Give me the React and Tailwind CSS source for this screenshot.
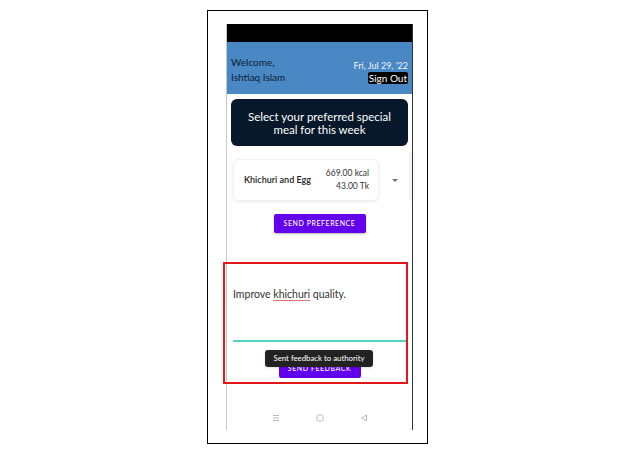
export default function App() {
  return (
    <div className="w-[644px] h-[453px] bg-white pl-[207px] pt-[10px] font-['Lato','Noto_Sans',sans-serif]">
      <div className="w-[221px] h-[434px] border border-black pl-[18px] pt-[13px] relative">
        {/* phone screen */}
        <div className="w-[187px] h-[406px] border-l border-l-[#c8c8c8] border-r border-r-[#333] flex flex-col bg-white">
          <div className="h-[18px] bg-black" />
          <div className="h-[52px] bg-[#4a87c5] flex items-center justify-between pl-[4px] pr-[4px] pt-[4px]">
            <div className="text-[10px] leading-[15px] text-[#0e1d33]">
              <div>Welcome,</div>
              <div>Ishtiaq Islam</div>
            </div>
            <div className="flex flex-col items-end pt-[3px]">
              <div className="text-[9px] leading-[12px] text-[#eef4fb]">Fri, Jul 29, '22</div>
              <div className="text-[10px] leading-[12px] text-white bg-black px-[1px] rounded-[2px]">Sign Out</div>
            </div>
          </div>

          <div className="mx-[4px] mt-[5px] h-[47px] rounded-[6px] bg-[#061829] flex flex-col items-center justify-center text-white text-[11.5px] leading-[13px]">
            <div>Select your preferred special</div>
            <div>meal for this week</div>
          </div>

          <div className="flex items-center mt-[13px] pl-[6px]">
            <div className="w-[146px] h-[42px] rounded-[6px] border border-[#f0f0f0] shadow-[0_1px_3px_rgba(0,0,0,0.08)] flex items-center justify-between pl-[10px] pr-[9px]">
              <div className="text-[9px] font-semibold text-[#222]">Khichuri and Egg</div>
              <div className="text-[8.5px] leading-[13px] text-[#333] text-right">
                <div>669.00 kcal</div>
                <div>43.00 Tk</div>
              </div>
            </div>
            <div className="ml-[13px] w-0 h-0 border-l-[3px] border-r-[3px] border-t-[3px] border-l-transparent border-r-transparent border-t-[#777]" />
            <div className="ml-auto w-[3px] h-[50px] -mt-[8px] bg-[#f2f2f2] rounded-l-[3px]" />
          </div>

          <div className="flex justify-center mt-[13px]">
            <button className="w-[92px] h-[19px] rounded-[2px] bg-[#6200ee] text-white text-[7px] tracking-[0.08em] font-medium shadow-[0_1px_2px_rgba(0,0,0,0.3)]">
              SEND PREFERENCE
            </button>
          </div>

          <div className="mt-[55px] pl-[6px] text-[10.5px] text-[#333] leading-[12px]">
            Improve <span className="underline decoration-[#e07070] underline-offset-[2px]">khichuri</span> quality.
          </div>
          <div className="ml-[6px] mr-[6px] mt-[40px] h-[2px] bg-[#4fd3c0]" />
          <div className="flex justify-center mt-[17px]">
            <button className="w-[82px] h-[19px] rounded-[2px] bg-[#6200ee] text-white text-[7px] tracking-[0.08em] font-medium">
              SEND FEEDBACK
            </button>
          </div>

          <div className="mt-auto mb-[7px] flex justify-center gap-[36px] text-[#aaa] items-center h-[10px]">
            <svg width="8" height="8" viewBox="0 0 8 8" stroke="#aaa" strokeWidth="0.8" fill="none">
              <path d="M1 1.5h6M1 4h6M1 6.5h6" />
            </svg>
            <svg width="8" height="8" viewBox="0 0 8 8" stroke="#aaa" strokeWidth="0.8" fill="none">
              <rect x="1" y="1" width="6" height="6" rx="1.5" />
            </svg>
            <svg width="8" height="8" viewBox="0 0 8 8" stroke="#aaa" strokeWidth="0.8" fill="none">
              <path d="M6.5 1L1.5 4l5 3z" />
            </svg>
          </div>
        </div>

        {/* annotation box */}
        <div className="absolute left-[15px] top-[251px] w-[185px] h-[122px] border-2 border-[#e3161c]" />
        {/* snackbar */}
        <div className="absolute left-[57px] top-[339px] w-[108px] h-[17px] rounded-[3px] bg-[#222] text-white text-[7.8px] flex items-center justify-center shadow">
          Sent feedback to authority
        </div>
      </div>
    </div>
  );
}
